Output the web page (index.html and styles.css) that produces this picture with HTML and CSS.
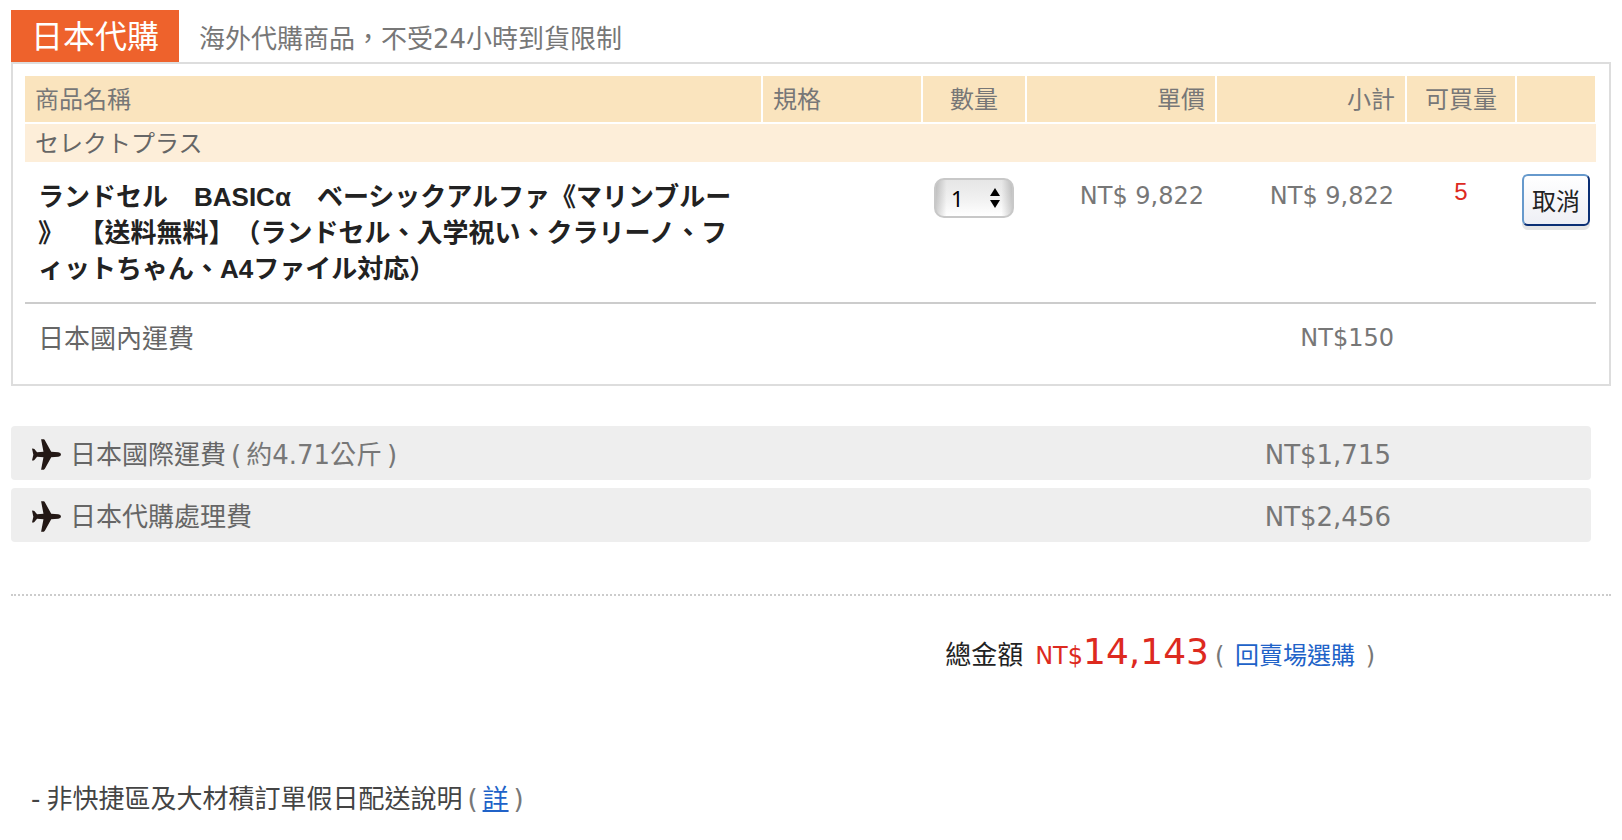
FILE: index.html
```html
<!DOCTYPE html>
<html lang="zh-TW">
<head>
<meta charset="utf-8">
<meta name="viewport" content="width=device-width, initial-scale=1">
<title>日本代購</title>
<link rel="stylesheet" href="styles.css">
</head>
<body>
<svg class="sprite" aria-hidden="true">
  <symbol id="plane" viewBox="36 30 86 90">
    <path fill="#231815" d="M63 30H71Q74 31 75 34L93 67L114 68Q122 69 122 75Q122 81 114 82L93 83L75 116Q74 119 71 120H63L70 83L51 82L43 91Q42 93 36 93L40 76L36 57Q42 57 43 59L51 68L70 67Z"/>
  </symbol>
</svg>
<main>
  <header class="heading">
    <h1 class="tab">日本代購</h1>
    <p class="subtitle">海外代購商品，不受24小時到貨限制</p>
  </header>

  <section class="cart">
    <table class="items">
      <colgroup>
        <col><col class="col-spec"><col class="col-qty"><col class="col-price"><col class="col-price"><col class="col-stock"><col class="col-action">
      </colgroup>
      <thead>
        <tr>
          <th>商品名稱</th>
          <th>規格</th>
          <th class="center">數量</th>
          <th class="right">單價</th>
          <th class="right">小計</th>
          <th class="center">可買量</th>
          <td class="blank"></td>
        </tr>
      </thead>
      <tbody>
        <tr class="shop"><td colspan="7">セレクトプラス</td></tr>
        <tr class="item">
          <td class="name">ランドセル　BASICα　ベーシックアルファ《マリンブルー<br>》&nbsp; 【送料無料】（ランドセル、入学祝い、クラリーノ、フ<br>ィットちゃん、A4ファイル対応）</td>
          <td></td>
          <td class="center">
            <span class="stepper">
              <select class="qty" aria-label="數量"><option>1</option><option>2</option><option>3</option><option>4</option><option>5</option></select>
              <svg class="arrows" viewBox="0 0 10 20" aria-hidden="true"><path d="M5 0L10 8H0ZM5 20L0 12H10Z"/></svg>
            </span>
          </td>
          <td class="price">NT$ 9,822</td>
          <td class="price">NT$ 9,822</td>
          <td class="stock">5</td>
          <td class="action"><button class="cancel" type="button">取消</button></td>
        </tr>
        <tr class="freight">
          <td colspan="4">日本國內運費</td>
          <td class="price">NT$150</td>
          <td colspan="2"></td>
        </tr>
      </tbody>
    </table>
  </section>

  <section class="fees">
    <div class="fee">
      <svg class="plane"><use href="#plane"/></svg>
      <span class="fee-name">日本國際運費<span class="note"><span class="paren">(</span>約4.71公斤<span class="paren">)</span></span></span>
      <span class="amount">NT$1,715</span>
    </div>
    <div class="fee">
      <svg class="plane"><use href="#plane"/></svg>
      <span class="fee-name">日本代購處理費</span>
      <span class="amount">NT$2,456</span>
    </div>
  </section>

  <section class="total">
    <span class="total-label">總金額</span>
    <span class="total-price">NT$<strong class="total-number">14,143</strong></span>
    <span class="back">( <a class="back-link" href="#">回賣場選購</a> )</span>
  </section>

  <p class="delivery"><span class="dash">-</span>非快捷區及大材積訂單假日配送說明<span class="note"><span class="paren">(</span><a class="detail" href="#">詳</a><span class="paren">)</span></span></p>
</main>
</body>
</html>
```
FILE: styles.css
```css
* { box-sizing: border-box; }

body {
  margin: 10px 11px;
  background: #fff;
  color: #666;
  font: 26px/36px "DejaVu Sans", "Noto Sans CJK TC", sans-serif;
  text-spacing-trim: space-all;
}

.sprite { position: absolute; width: 0; height: 0; }

.heading { display: flex; align-items: center; gap: 20px; }
.tab {
  margin: 0;
  padding: 2px 20px 0;
  background: #ee622c;
  color: #fff;
  font-size: 32px;
  font-weight: 400;
  line-height: 50px;
}
.subtitle { margin: 0; padding-top: 6px; color: #777; }

.cart { border: 2px solid #ddd; padding: 12px 13px 20px 12px; }

.items { width: 100%; table-layout: fixed; border-collapse: separate; border-spacing: 0; }
.col-spec { width: 160px; }
.col-qty { width: 104px; }
.col-price { width: 190px; }
.col-stock { width: 110px; }
.col-action { width: 79px; }

th, td { padding: 0; text-align: left; vertical-align: top; }
th, .blank { background: #fae4be; border: solid #fff; border-width: 0 2px 2px 0; }
th { padding: 6px 10px 4px; color: #777; font-size: 24px; font-weight: 400; }
.blank { border-right-width: 1px; }
.items .center { text-align: center; }
.items .right { text-align: right; }

.shop td { padding: 2px 10px 0; background: #fdeed9; font-size: 24px; }

.item td { height: 142px; border-bottom: 2px solid #ccc; padding-top: 16px; }
.item .name {
  padding-top: 17px;
  padding-left: 13px;
  color: #222;
  font-family: "Liberation Sans", "Noto Sans CJK TC", sans-serif;
  font-weight: 700;
  white-space: nowrap;
}
.items .price { padding-right: 13px; color: #777; font-size: 24px; text-align: right; }
.item .stock {
  padding-top: 12px;
  padding-right: 2px;
  color: #dd2a1f;
  font-family: "Liberation Sans", sans-serif;
  font-size: 24px;
  text-align: center;
}

.item .center { padding-right: 2px; }
.stepper { position: relative; display: inline-block; }
.qty {
  display: block;
  width: 80px;
  height: 40px;
  padding: 0 15px;
  appearance: none;
  border: 2px solid #c8c8c8;
  border-radius: 10px;
  background:
    linear-gradient(to right, rgba(0, 0, 0, .18), transparent 14%, transparent 86%, rgba(0, 0, 0, .18)),
    linear-gradient(#e6e6e6, #f0f0f0 50%, #fff);
  color: #000;
  font: 22px/36px "Noto Sans", sans-serif;
}
.arrows { position: absolute; top: 10px; right: 14px; width: 10px; height: 20px; pointer-events: none; }

.item .action { padding: 12px 6px 0 0; text-align: right; }
.cancel {
  width: 68px;
  height: 52px;
  padding: 0;
  border: 2px solid;
  border-color: #6699cc #0b2f74 #0b2f74 #6699cc;
  border-radius: 6px;
  background: linear-gradient(#fff, #eeeff5);
  box-shadow: 0 4px 0 #e5e5e5;
  color: #222;
  font: 24px/36px "Noto Sans CJK TC", sans-serif;
}

.freight td { padding: 17px 13px 7px; }
.freight .price { padding-top: 16px; }

.fees { display: grid; gap: 8px; margin: 40px 20px 52px 0; }
.fee {
  display: flex;
  align-items: center;
  height: 54px;
  padding: 3px 200px 0 21px;
  border-radius: 4px;
  background: #eee;
}
.plane { width: 29px; height: 31px; margin-right: 9px; }
.note { color: #777; }
.paren { margin: 0 5px; color: #777; }
.amount { margin-left: auto; color: #777; }

.total {
  display: flex;
  justify-content: flex-end;
  align-items: baseline;
  padding: 32px 236px 0 0;
  border-top: 2px dotted #ccc;
  line-height: 48px;
}
.total-label { margin-right: 12px; color: #222; }
.total-price { color: #dd2a1f; font-size: 24px; }
.total-number { font-size: 36px; font-weight: 400; }
.back { margin-left: 6px; color: #777; font-size: 24px; }
a { color: #2062c8; }
.back-link { margin: 0 3px; text-decoration: none; }

.delivery { margin: 101px 20px 0; color: #444; }
.dash { margin-right: 6px; }
```
